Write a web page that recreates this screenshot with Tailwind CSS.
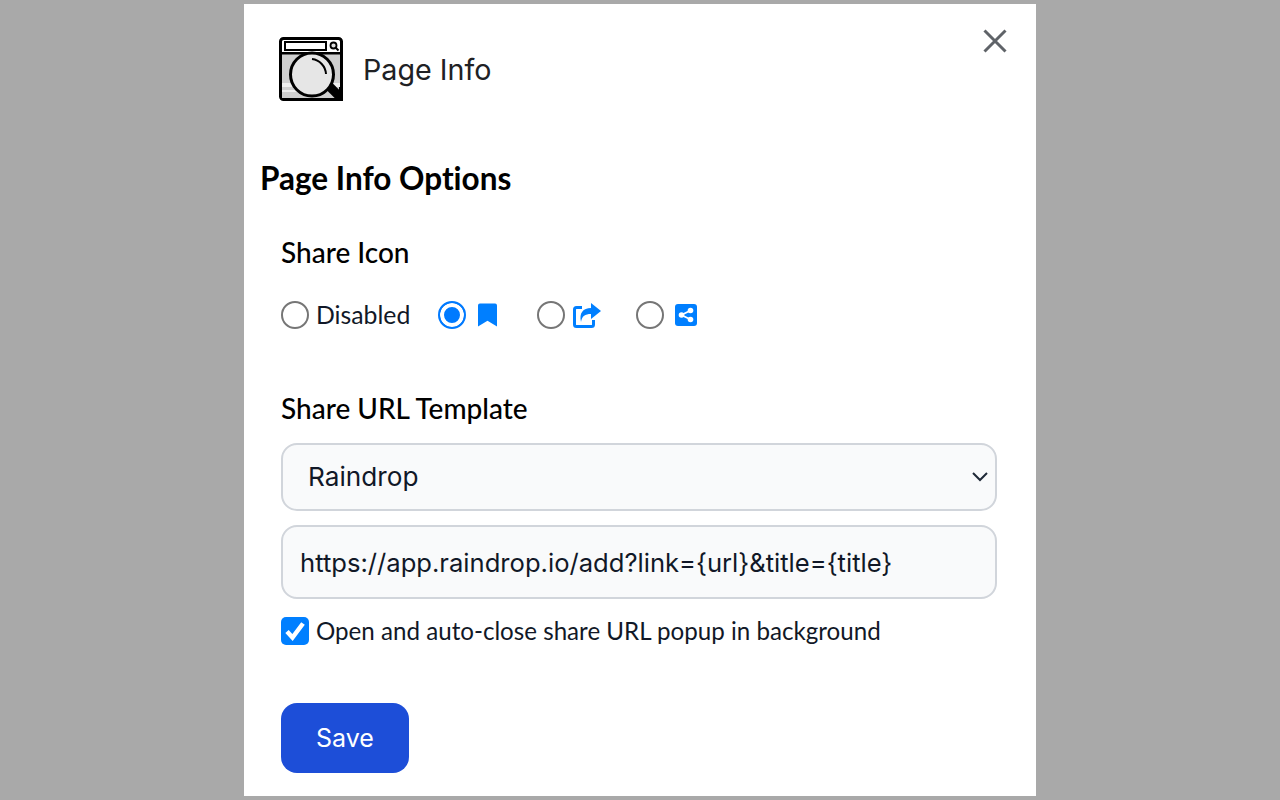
<!DOCTYPE html>
<html lang="en">
<head>
    <meta charset="UTF-8">
    <meta name="viewport" content="width=device-width, initial-scale=1.0">
    <title>Page Info Options</title>
    <script src="https://cdn.jsdelivr.net/npm/@tailwindcss/browser@4"></script>
</head>
<body class="bg-[#a9a9a9] h-screen overflow-hidden flex items-center justify-center">
    <div class="relative w-[792px] h-[792px] bg-white overflow-hidden">
        <!-- Close -->
        <button class="absolute left-[739px] top-[25px] text-[#5f6368]">
            <svg class="w-6 h-6" viewBox="0 0 24 24" fill="none" stroke="currentColor" stroke-width="3"><path d="M1.5 1.5L22.500 22.500M22.500 1.500L1.500 22.500"/></svg>
        </button>

        <!-- Header -->
        <div class="flex items-center gap-5 pl-[35px] pt-[33px]">
            <svg class="w-16 h-16 blur-[0.4px]" viewBox="0 0 64 64">
                <rect x="1.500" y="1.500" width="61" height="61" rx="3" fill="#fff" stroke="#000" stroke-width="3"/>
                <rect x="3" y="17" width="58" height="44" fill="#cfcfcf"/>
                <rect x="3" y="46" width="58" height="4" fill="#eee"/>
                <rect x="3" y="53" width="58" height="2" fill="#eee"/>
                <rect x="6" y="5" width="41" height="8" fill="#fff" stroke="#000" stroke-width="2"/>
                <circle cx="54.500" cy="8.500" r="3" fill="#ddd" stroke="#000" stroke-width="1.800"/>
                <path d="M56.500 10.500L59.500 13.500" stroke="#000" stroke-width="2"/>
                <rect x="3" y="15" width="58" height="2.500" fill="#000"/>
                <path d="M48 47L62 61" stroke="#000" stroke-width="9"/>
                <rect x="60" y="50" width="4" height="14" fill="#000"/>
                <circle cx="33" cy="37.500" r="21.500" fill="#e6e6e6" stroke="#000" stroke-width="3"/>
                <path d="M33 22A16 16 0 0 1 47 37" fill="none" stroke="#000" stroke-width="2"/>
            </svg>
            <span class="pt-[2px] font-['Inter',sans-serif] text-[28.700px] text-[#202124] leading-none">Page Info</span>
        </div>

        <form class="font-['Lato',sans-serif] [font-variant-ligatures:none]">
            <h1 class="ml-4 mt-[58px] text-[31.500px] leading-[38px] font-bold text-black">Page Info Options</h1>

            <div class="pl-[37px] pr-[39px]">
                <h2 class="mt-[38px] text-[28px] leading-[34px] font-medium text-black">Share Icon</h2>

                <div class="mt-[32px] flex items-center h-7 text-[24.800px] text-[#111827]">
                    <label class="flex items-center gap-[7px] w-[157px]">
                        <input type="radio" name="icon" class="appearance-none w-7 h-7 rounded-full border-2 border-[#767676] bg-white">
                        Disabled
                    </label>
                    <label class="flex items-center gap-3 w-[99px]">
                        <input type="radio" name="icon" checked class="appearance-none w-7 h-7 rounded-full border-2 border-[#007aff] bg-[#007aff] shadow-[inset_0_0_0_4px_white]">
                        <svg class="w-[19px] h-6" viewBox="0 0 20 24" fill="#007fff"><path d="M0 2Q0 0 2 0H18Q20 0 20 2V24L10 18L0 24Z"/></svg>
                    </label>
                    <label class="flex items-center gap-2 w-[99px]">
                        <input type="radio" name="icon" class="appearance-none w-7 h-7 rounded-full border-2 border-[#767676] bg-white">
                        <svg class="w-7 h-[25px]" viewBox="0 0 28 25" fill="none">
                            <path d="M9 4.500H3.500Q1.500 4.500 1.500 6.500V21.500Q1.500 23.500 3.500 23.500H18.500Q20.500 23.500 20.500 21.500V17" stroke="#007fff" stroke-width="3"/>
                            <path d="M18 0L28 8L18 16V11C12 11 9 13 8 19C6 10 10 5 18 5Z" fill="#007fff"/>
                        </svg>
                    </label>
                    <label class="flex items-center gap-[11px]">
                        <input type="radio" name="icon" class="appearance-none w-7 h-7 rounded-full border-2 border-[#767676] bg-white">
                        <svg class="w-[22px] h-[22px]" viewBox="0 0 22 22">
                            <rect width="22" height="22" rx="3" fill="#007fff"/>
                            <path d="M15.500 6.500L6.500 11L15.500 15.500" stroke="#fff" stroke-width="1.800" fill="none"/>
                            <circle cx="15.500" cy="6.500" r="2.800" fill="#fff"/>
                            <circle cx="6.500" cy="11" r="2.800" fill="#fff"/>
                            <circle cx="15.500" cy="15.500" r="2.800" fill="#fff"/>
                        </svg>
                    </label>
                </div>

                <h2 class="mt-[62px] text-[28px] leading-[34px] font-medium text-black">Share URL Template</h2>

                <div class="relative mt-[18px]">
                    <select class="appearance-none block w-full h-[68px] pl-[25px] pr-10 rounded-2xl border-2 border-[#d1d5db] bg-[#f9fafb] font-['Inter',sans-serif] text-[26.200px] text-[#111827]">
                        <option>Raindrop</option>
                    </select>
                    <svg class="absolute right-[9px] top-[29px] w-4 h-[10px]" viewBox="0 0 16 10" fill="none" stroke="#1f2937" stroke-width="2"><path d="M1 1L8 8L15 1"/></svg>
                </div>

                <input type="text" value="https://app.raindrop.io/add?link={url}&amp;title={title}" class="block w-full h-[74px] mt-[14px] px-[17px] rounded-2xl border-2 border-[#d1d5db] bg-[#f9fafb] font-['Inter',sans-serif] text-[25.600px] text-[#111827]">

                <label class="mt-[18px] flex items-center gap-[7px] h-7 text-[24.150px] text-[#111827]">
                    <span class="relative w-7 h-7">
                        <input type="checkbox" checked class="appearance-none block w-7 h-7 rounded-[5px] bg-[#007fff]">
                        <svg class="absolute inset-0 w-7 h-7" viewBox="0 0 28 28" fill="none" stroke="#fff" stroke-width="4.500"><path d="M6 14.500L11.500 20.500L22 6.500"/></svg>
                    </span>
                    Open and auto-close share URL popup in background
                </label>

                <button type="button" class="block mt-[58px] w-32 h-[70px] pt-[2px] rounded-2xl bg-[#1d4ed8] text-white font-['Inter',sans-serif] text-[25px]">Save</button>
            </div>
        </form>
    </div>
</body>
</html>
